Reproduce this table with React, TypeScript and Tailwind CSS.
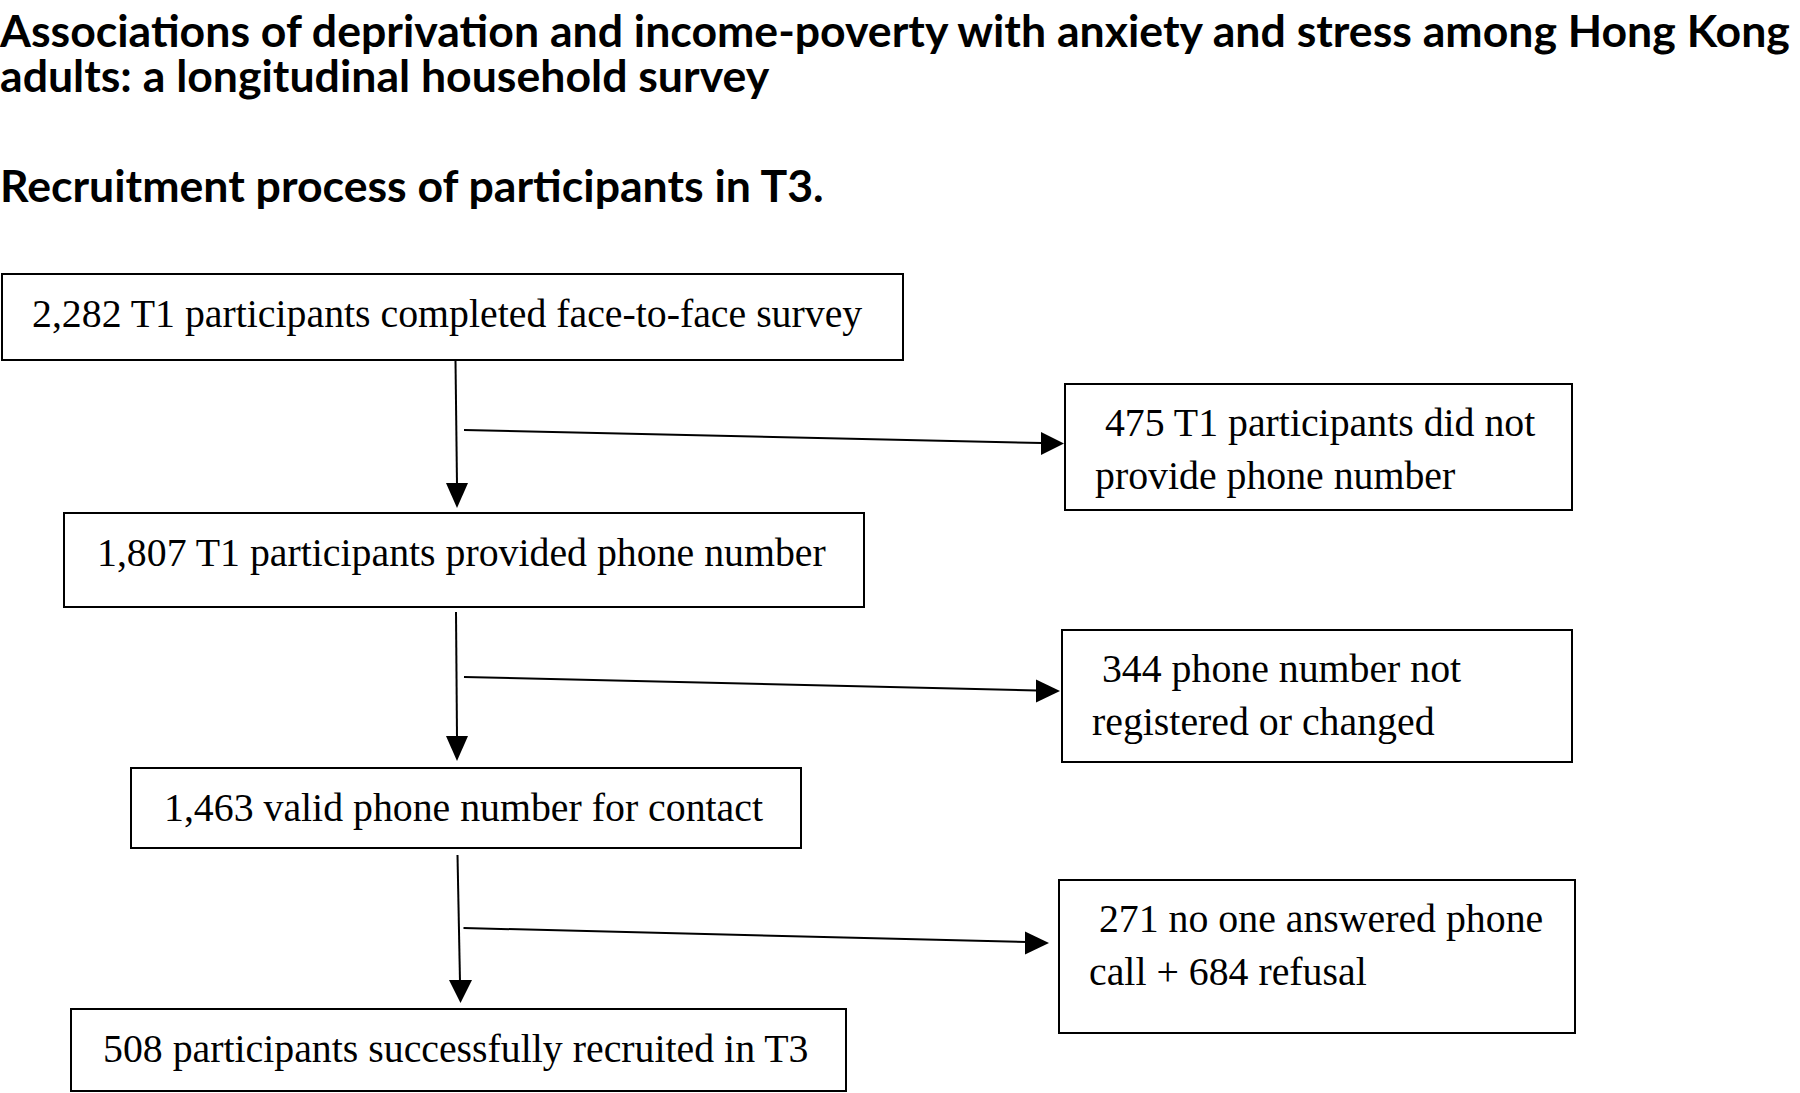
import React from "react";

function Box({ className, children }: { className: string; children: React.ReactNode }) {
  return (
    <div
      className={
        "absolute box-border border-2 border-black bg-white text-black font-['Liberation_Serif','Times_New_Roman',serif] text-[39.8px] whitespace-nowrap " +
        className
      }
    >
      {children}
    </div>
  );
}

export default function App() {
  return (
    <div className="relative w-[1800px] h-[1093px] overflow-hidden bg-white text-black">
      <header className="h-[240px] pt-[7px] font-['Lato','Open_Sans',sans-serif] font-bold whitespace-nowrap">
        <h1 className="text-[44.6px] leading-[45px]">
          Associations of deprivation and income-poverty with anxiety and stress among Hong Kong
          <br />
          adults: a longitudinal household survey
        </h1>
        <h2 className="mt-[65px] text-[44.6px] leading-[45px]">
          Recruitment process of participants in T3.
        </h2>
      </header>

      <section className="relative h-[853px]">
        <svg
          className="absolute inset-0 pointer-events-none"
          width="1800"
          height="853"
          viewBox="0 0 1800 853"
        >
          <g stroke="#000" strokeWidth="2" fill="none">
            <line x1="455.5" y1="121" x2="457" y2="245" />
            <line x1="464" y1="190" x2="1042" y2="203" />
            <line x1="456" y1="372" x2="457" y2="498" />
            <line x1="464" y1="437" x2="1037" y2="450.5" />
            <line x1="457.5" y1="615" x2="460" y2="742" />
            <line x1="463.5" y1="688" x2="1027" y2="702" />
          </g>
          <g fill="#000">
            <polygon points="457,268 446,243 468,243" />
            <polygon points="1064,203.5 1041,192 1041,215" />
            <polygon points="457,521 446,496 468,496" />
            <polygon points="1060,451 1036,439.5 1036,462.5" />
            <polygon points="460.5,763 449,740 472,740" />
            <polygon points="1049,703 1025,691.5 1025,714.5" />
          </g>
        </svg>

        <Box className="left-[1px] top-[33px] w-[903px] h-[88px] pl-[29px] pt-[13px] leading-[52px]">
          2,282 T1 participants completed face-to-face survey
        </Box>
        <Box className="left-[63px] top-[272px] w-[802px] h-[96px] pl-[32px] pt-[13px] leading-[52px]">
          1,807 T1 participants provided phone number
        </Box>
        <Box className="left-[130px] top-[527px] w-[672px] h-[82px] pl-[32px] pt-[13px] leading-[52px]">
          1,463 valid phone number for contact
        </Box>
        <Box className="left-[70px] top-[768px] w-[777px] h-[84px] pl-[31px] pt-[13px] leading-[52px]">
          508 participants successfully recruited in T3
        </Box>

        <Box className="left-[1064px] top-[143px] w-[509px] h-[128px] pl-[29px] pt-[12px] leading-[52.5px]">
          {"\u00a0475 T1 participants did not"}
          <br />
          provide phone number
        </Box>
        <Box className="left-[1061px] top-[389px] w-[512px] h-[134px] pl-[29px] pt-[12px] leading-[52.5px]">
          {"\u00a0344 phone number not"}
          <br />
          registered or changed
        </Box>
        <Box className="left-[1058px] top-[639px] w-[518px] h-[155px] pl-[29px] pt-[12px] leading-[52.5px]">
          {"\u00a0271 no one answered phone"}
          <br />
          call + 684 refusal
        </Box>
      </section>
    </div>
  );
}
